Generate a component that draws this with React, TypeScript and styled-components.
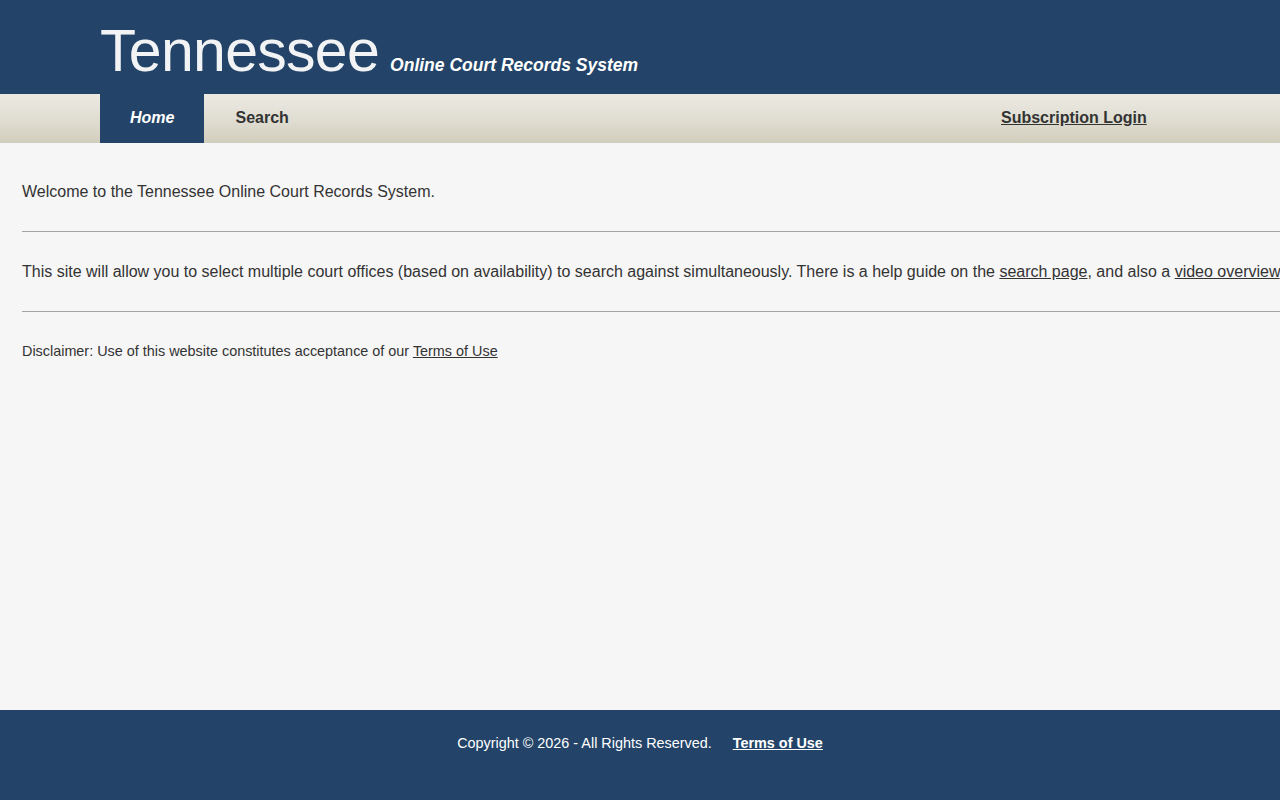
import styled, { createGlobalStyle } from "styled-components";

const GlobalStyle = createGlobalStyle`
  html, body {
    margin: 0;
    padding: 0;
    overflow-x: hidden;
    background: #f6f6f6;
    font-family: "Liberation Sans", Arial, sans-serif;
    color: #333;
  }
`;

const Page = styled.div`
  min-height: 800px;
  display: flex;
  flex-direction: column;
`;

const Header = styled.header`
  background: #234468;
  height: 94px;
  padding-left: 100px;
  display: flex;
  align-items: flex-end;
  box-sizing: border-box;
  padding-bottom: 13px;
`;

const Brand = styled.h1`
  margin: 0;
  font-size: 59px;
  font-weight: normal;
  line-height: 1;
  color: #f2f3f5;
  letter-spacing: -0.7px;
`;

const Tagline = styled.span`
  margin-left: 11px;
  margin-bottom: 5px;
  font-size: 17.5px;
  font-weight: bold;
  font-style: italic;
  color: #fff;
`;

const Nav = styled.nav`
  position: relative;
  height: 49px;
  padding-left: 100px;
  display: flex;
  align-items: stretch;
  background: linear-gradient(to bottom, #ebe9e1 0%, #e2e0d5 45%, #d2cebd 100%);
`;

const NavItem = styled.a<{ $active?: boolean }>`
  display: flex;
  align-items: center;
  justify-content: center;
  padding: 0 ${(p) => (p.$active ? "30px" : "31px")} 2px;
  font-size: 16px;
  font-weight: bold;
  font-style: ${(p) => (p.$active ? "italic" : "normal")};
  color: ${(p) => (p.$active ? "#fff" : "#333")};
  background: ${(p) => (p.$active ? "#234468" : "transparent")};
  text-decoration: none;
`;

const LoginLink = styled.a`
  position: absolute;
  left: 1001px;
  top: 15px;
  font-size: 16px;
  font-weight: bold;
  color: #333;
  text-decoration: underline;
`;

const Main = styled.main`
  flex: 1;
  padding: 36px 0 0 22px;
  width: 1500px;
`;

const Text = styled.p<{ $small?: boolean }>`
  margin: 0;
  font-size: ${(p) => (p.$small ? "14.4px" : "16px")};
  line-height: ${(p) => (p.$small ? "24px" : "26px")};
  white-space: nowrap;
`;

const Link = styled.a`
  color: #333;
  text-decoration: underline;
`;

const Rule = styled.hr`
  border: 0;
  border-top: 1px solid #a3a3a3;
  margin: 26px 0 27px;
`;

const Footer = styled.footer`
  height: 90px;
  background: #234468;
  display: flex;
  justify-content: center;
  align-items: flex-start;
  padding-top: 25px;
  box-sizing: border-box;
  gap: 21px;
  font-size: 14.4px;
  color: #fff;
`;

const FooterLink = styled.a`
  color: #fff;
  font-weight: bold;
  text-decoration: underline;
`;

export default function App() {
  return (
    <Page>
      <GlobalStyle />
      <Header>
        <Brand>Tennessee</Brand>
        <Tagline>Online Court Records System</Tagline>
      </Header>
      <Nav>
        <NavItem $active href="#">
          Home
        </NavItem>
        <NavItem href="#">Search</NavItem>
        <LoginLink href="#">Subscription Login</LoginLink>
      </Nav>
      <Main>
        <Text>Welcome to the Tennessee Online Court Records System.</Text>
        <Rule />
        <Text>
          This site will allow you to select multiple court offices (based on
          availability) to search against simultaneously. There is a help guide
          on the <Link href="#">search page</Link>, and also a{" "}
          <Link href="#">video overview</Link>.
        </Text>
        <Rule />
        <Text $small>
          Disclaimer: Use of this website constitutes acceptance of our{" "}
          <Link href="#">Terms of Use</Link>
        </Text>
      </Main>
      <Footer>
        <span>Copyright © 2026 - All Rights Reserved.</span>
        <FooterLink href="#">Terms of Use</FooterLink>
      </Footer>
    </Page>
  );
}
